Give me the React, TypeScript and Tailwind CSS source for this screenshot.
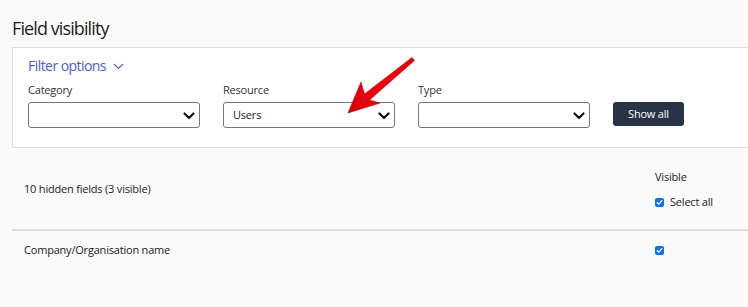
import React from "react";

function Chevron() {
  return (
    <svg width="12" height="8" viewBox="0 0 12 8" className="pointer-events-none absolute right-[4px] top-[9px]">
      <path d="M1.5 1.5 L6 6 L10.5 1.5" fill="none" stroke="#111" strokeWidth="2.2" strokeLinecap="round" strokeLinejoin="round" />
    </svg>
  );
}

function SelectField({ label, value }: { label: string; value?: string }) {
  return (
    <div className="flex w-[172px] flex-col">
      <span className="text-[11px] leading-[14px] tracking-[-0.2px] text-[#333]">{label}</span>
      <div className="relative mt-[5px] h-[26px] w-[172px] rounded-[3px] border border-[#777] bg-white">
        <span className="block pl-[9px] text-[11px] leading-[24px] tracking-[-0.2px] text-[#222]">{value}</span>
        <Chevron />
      </div>
    </div>
  );
}

function Check() {
  return (
    <span className="flex h-[9px] w-[9px] shrink-0 items-center justify-center rounded-[2px] bg-[#0f6ef5]">
      <svg width="7" height="7" viewBox="0 0 7 7">
        <path d="M1.2 3.7 L2.8 5.2 L5.8 1.6" fill="none" stroke="#fff" strokeWidth="1.3" strokeLinecap="round" strokeLinejoin="round" />
      </svg>
    </span>
  );
}

export default function App() {
  return (
    <div className="relative h-[307px] w-[748px] overflow-hidden bg-[#fafafa] font-['Open_Sans',sans-serif]">
      <h1 className="pl-3 pt-[16px] text-[18px] font-normal leading-[24px] tracking-[-0.9px] text-[#1e1e1e]">Field visibility</h1>

      <div className="ml-3 mt-[7px] w-[760px] border border-[#e0e0e0] bg-white pb-[19px] pl-[15px] pt-[9px]">
        <div className="flex h-[18px] items-center gap-[7px]">
          <span className="text-[14px] leading-[18px] tracking-[-0.55px] text-[#4f5ad8]">Filter options</span>
          <svg width="11" height="7" viewBox="0 0 11 7">
            <path d="M1 1 L5.5 5.5 L10 1" fill="none" stroke="#4f5ad8" strokeWidth="1.1" />
          </svg>
        </div>
        <div className="mt-[8px] flex items-end gap-[23px]">
          <SelectField label="Category" />
          <SelectField label="Resource" value="Users" />
          <SelectField label="Type" />
          <button className="mb-[2px] h-[24px] w-[71px] rounded-[3px] bg-[#263445] text-[11px] font-medium tracking-[-0.2px] text-white">
            Show all
          </button>
        </div>
      </div>

      <div className="flex pt-[22px] pb-[20px] text-[11px] leading-[14px] tracking-[-0.2px] text-[#222]">
        <span className="ml-6 mt-[12px]">10 hidden fields (3 visible)</span>
        <div className="ml-auto mr-[35px] flex w-[58px] flex-col">
          <span>Visible</span>
          <div className="mt-[11px] flex items-center gap-[6px] whitespace-nowrap">
            <Check />
            <span>Select all</span>
          </div>
        </div>
      </div>
      <div className="ml-3 border-t-2 border-[#dddddd]" />
      <div className="flex pt-[12px] text-[11px] leading-[14px] tracking-[-0.2px] text-[#222]">
        <span className="ml-6">Company/Organisation name</span>
        <div className="ml-auto mr-[35px] flex h-[14px] w-[58px] items-center">
          <Check />
        </div>
      </div>

      <svg className="pointer-events-none absolute left-0 top-0" width="748" height="307">
        <defs>
          <linearGradient id="arr" x1="0" y1="1" x2="1" y2="0">
            <stop offset="0" stopColor="#d4000a" />
            <stop offset="0.5" stopColor="#f0000f" />
            <stop offset="1" stopColor="#e0000c" />
          </linearGradient>
        </defs>
        <polygon
          points="348,113 361,82 364.5,94 412,57.5 414.5,60.5 369.5,100 380,103"
          fill="url(#arr)"
          stroke="#c8000a"
          strokeWidth="0.6"
          strokeLinejoin="round"
        />
      </svg>
    </div>
  );
}
